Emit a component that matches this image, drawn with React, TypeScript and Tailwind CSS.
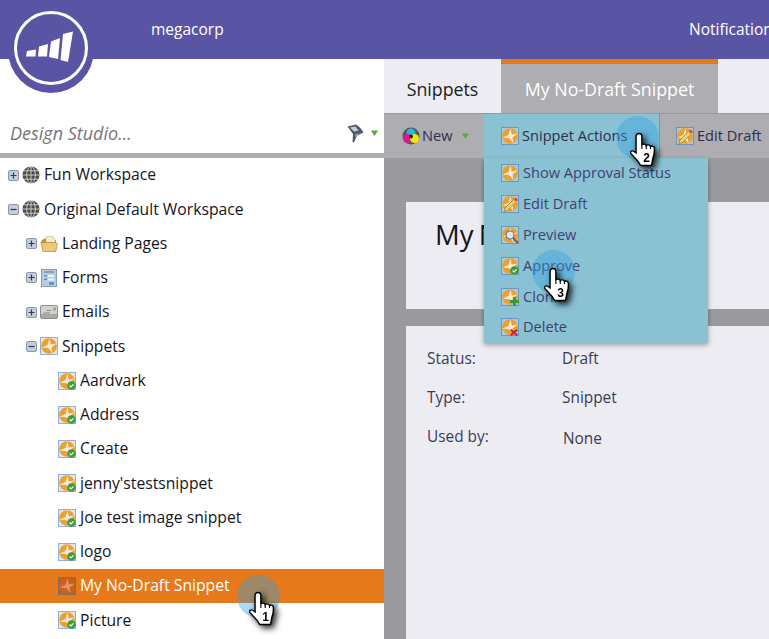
import React from "react";

type Badge = "check" | "pencil" | "zoom" | "plus" | "x" | "none";

const Logo = () => (
  <svg width="86" height="86" viewBox="0 0 86 86" className="absolute left-[8px] top-[7px]">
    <circle cx="43" cy="43" r="43" fill="#5a54a4" />
    <circle cx="43" cy="41" r="35.5" fill="none" stroke="#fff" strokeWidth="3" />
    <path d="M19 44l9-1.500-.5 7H18z" fill="#fff" />
    <path d="M31 39.500l9-2.500-1 12.500h-9z" fill="#fff" />
    <path d="M43 34.500l9-3.500-2 21-9-2z" fill="#fff" />
    <path d="M55 27l10-2.500L60 55l-7.500-2z" fill="#fff" />
  </svg>
);

const SnippetIcon = ({ badge = "none", dim = false }: { badge?: Badge; dim?: boolean }) => (
  <svg width="18" height="18" viewBox="0 0 18 18" className="shrink-0">
    <rect x="0.5" y="0.5" width="17" height="17" fill={dim ? "#b9651f" : "#c9d3de"} fillOpacity={dim ? 1 : 0.55} stroke="#2f6fb5" strokeDasharray="1 1" />
    <circle cx="9" cy="9" r="7.800" fill={dim ? "#d0601a" : "#efa02c"} />
    <path d="M1.500 10.500 7.500 8 9.500 1.500l1.300 6 5.700-1-5 4 1 5.800-4-5z" fill={dim ? "#dc9a68" : "#f0ebe2"} />
    {badge === "check" && (
      <>
        <circle cx="13.500" cy="13.500" r="4.300" fill="#3f9c3a" />
        <path d="M11.500 13.500l1.500 1.500 2.500-2.700" fill="none" stroke="#fff" strokeWidth="1.200" />
      </>
    )}
    {badge === "pencil" && (
      <>
        <path d="M3 16.500l1-3.500 8.500-8.500 2.500 2.500-8.500 8.500z" fill="#e8d36a" stroke="#8d7a30" strokeWidth="0.700" />
        <path d="M13.200 3.800l1.300-1.300 2.500 2.500-1.300 1.300z" fill="#d33" />
      </>
    )}
    {badge === "zoom" && (
      <>
        <circle cx="9" cy="9" r="4" fill="#dde6f2" stroke="#6b7686" strokeWidth="1.200" />
        <path d="M12 12l5 5" stroke="#8a5a2a" strokeWidth="2" />
      </>
    )}
    {badge === "plus" && <path d="M12 9h3v3h3v3h-3v3h-3v-3H9v-3h3z" fill="#3c9a34" />}
    {badge === "x" && <path d="M10.500 11l2.500 2 2.500-2 1.500 1.500-2.500 2 2.500 2-1.500 1.500-2.500-2-2.500 2-1.500-1.500 2.500-2-2.500-2z" fill="#d3202a" />}
  </svg>
);

const Expander = ({ open }: { open?: boolean }) => (
  <svg width="11" height="11" viewBox="0 0 11 11" className="shrink-0">
    <rect x="0.500" y="0.500" width="10" height="10" rx="1.500" fill="#c3cede" stroke="#8b95a6" />
    <path d={open ? "M2.500 5.500h6" : "M2.500 5.500h6M5.500 2.500v6"} stroke="#2f3b4e" strokeWidth="1.200" />
  </svg>
);

const Globe = () => (
  <svg width="18" height="18" viewBox="0 0 18 18" className="shrink-0">
    <circle cx="9" cy="9" r="8.500" fill="#4b4b4b" />
    <path d="M.5 9h17M2 4.800h14M2 13.200h14M9 .5v17" stroke="#e4e4e4" strokeWidth="0.800" />
    <ellipse cx="9" cy="9" rx="4.300" ry="8.500" fill="none" stroke="#e4e4e4" strokeWidth="0.800" />
  </svg>
);

const FolderIcon = () => (
  <svg width="18" height="18" viewBox="0 0 18 18" className="shrink-0">
    <path d="M1 6.500 4 3.500h5l1.500 1.500H16v11H3z" fill="#b98f3e" />
    <path d="M6 1.500h7l2 2.500v4H6z" fill="#f3ead0" stroke="#c4ad75" strokeWidth="0.500" />
    <path d="M0.800 7.500h15.500l1 1-1.500 8H3z" fill="#ecc878" stroke="#a98538" strokeWidth="0.700" />
  </svg>
);

const FormIcon = () => (
  <svg width="16" height="18" viewBox="0 0 16 18" className="shrink-0">
    <rect x="0.500" y="0.500" width="15" height="17" fill="#b6cde3" stroke="#8a9bb0" />
    <path d="M3 3h10" stroke="#6f8fb2" strokeWidth="1.500" />
    <rect x="7" y="6" width="6" height="2" fill="#f3f6fa" />
    <rect x="7" y="9.500" width="6" height="2" fill="#f3f6fa" />
    <rect x="3" y="6" width="3" height="1.500" fill="#6f8fb2" />
    <rect x="3" y="9.500" width="3" height="1.500" fill="#6f8fb2" />
    <rect x="8" y="13" width="5" height="3" fill="#5c97d4" />
  </svg>
);

const EmailIcon = () => (
  <svg width="18" height="14" viewBox="0 0 18 14" className="shrink-0">
    <rect x="0.500" y="0.500" width="17" height="13" rx="1.500" fill="#d2d2d2" stroke="#8f8f8f" />
    <rect x="1" y="9" width="16" height="4" fill="#a8a8a8" />
    <path d="M3 8h7M7 5.500h4" stroke="#888" />
    <rect x="13" y="2.500" width="3" height="3" fill="#b5a53a" />
  </svg>
);

const NewIcon = () => (
  <svg width="18" height="18" viewBox="0 0 18 18" className="shrink-0">
    <circle cx="9" cy="9" r="8.500" fill="#555" />
    <circle cx="9" cy="6" r="4.500" fill="#2ab5e8" />
    <circle cx="5.500" cy="11.500" r="4.500" fill="#e0188c" />
    <circle cx="12.500" cy="11.500" r="4.500" fill="#f6e316" />
    <circle cx="9" cy="9.500" r="2" fill="#222" />
  </svg>
);

const FilterIcon = () => (
  <svg width="17" height="19" viewBox="0 0 17 19" className="shrink-0">
    <path d="M0.500 2.500 9 .5c3 1.500 6 5 7.500 8l-6.500 3-3 7-1.500-.5L6 10z" fill="#4f5a70" />
    <path d="M3 3.500 8.500 2.500l3 4-4.500 1z" fill="#c5cedc" />
    <path d="M7.500 10.500l4.500-1.500-3 4z" fill="#8f9ab0" />
  </svg>
);

const Caret = () => (
  <svg width="7" height="6" viewBox="0 0 7 6" className="shrink-0">
    <path d="M0 .5h7L3.500 6z" fill="#5fa83c" />
  </svg>
);

// numbered hand cursor
const Hand = ({ n, className }: { n: number; className: string }) => (
  <svg width="27" height="37" viewBox="0 0 27 37" className={`absolute drop-shadow-[3px_3px_3px_rgba(0,0,0,0.85)] ${className}`}>
    <g transform="scale(1.120 1)">
      <path
        d="M8 1.500c1.600 0 2.600 1 2.600 2.600V13c.6-1.300 3.400-1.300 3.900.6.7-1.200 3.300-1 3.800.9.800-.9 3.200-.6 3.400 1.400.3 3.400-.1 7.300-1.200 10.100l-1.300 7.500H9.600L7 29 .9 21.600c-1.200-1.600.6-3.500 2.400-2.300L5.400 21V4.100C5.400 2.500 6.500 1.500 8 1.500z"
        fill="#fff"
        stroke="#000"
        strokeWidth="1.300"
      />
      <path d="M10.600 13v4M14.500 13.600V17M18.300 14.500V17" stroke="#000" strokeWidth="1" />
    </g>
    <text x="16.500" y="30" textAnchor="middle" fontSize="12" fontWeight="700" fontFamily="'Liberation Sans', sans-serif" fill="#000">
      {n}
    </text>
  </svg>
);

const Pulse = ({ className }: { className: string }) => (
  <div className={`absolute h-[43px] w-[43px] rounded-full bg-[#2f9fe0]/40 ${className}`} />
);

const TreeRow = ({
  indent,
  expander,
  icon,
  label,
  selected,
}: {
  indent: string;
  expander?: "open" | "closed";
  icon: React.ReactNode;
  label: string;
  selected?: boolean;
}) => (
  <div className={`flex h-[34.25px] items-center ${indent} ${selected ? "bg-[#e67a1a] text-white" : "text-[#14141c]"}`}>
    {expander && (
      <span className="mr-[3px] flex w-[11px]">
        <Expander open={expander === "open"} />
      </span>
    )}
    <span className="mr-[4px] flex w-[18px] justify-center">{icon}</span>
    <span className="whitespace-nowrap">{label}</span>
  </div>
);

const snippets = ["Aardvark", "Address", "Create", "jenny'stestsnippet", "Joe test image snippet", "logo"];

const menuItems: { label: string; badge: Badge }[] = [
  { label: "Show Approval Status", badge: "none" },
  { label: "Edit Draft", badge: "pencil" },
  { label: "Preview", badge: "zoom" },
  { label: "Approve", badge: "check" },
  { label: "Clone", badge: "plus" },
  { label: "Delete", badge: "x" },
];

const details = [
  { label: "Status:", value: "Draft", extra: "" },
  { label: "Type:", value: "Snippet", extra: "" },
  { label: "Used by:", value: "None", extra: "ml-px mt-[2px]" },
];

export default function App() {
  return (
    <div className="relative h-[639px] w-[769px] overflow-hidden bg-white font-['Open_Sans',sans-serif]">
      <header className="flex h-[59px] items-center justify-between bg-[#5a54a4] pl-[151px] text-[15.500px] text-white">
        <span>megacorp</span>
        <span className="w-[80px] overflow-hidden whitespace-nowrap">Notifications</span>
      </header>

      <div className="grid h-[580px] grid-cols-[384px_1fr]">
        {/* left tree */}
        <aside className="overflow-hidden bg-white">
          <div className="flex h-[99px] items-end border-b-[5px] border-[#aeadb2] pb-[6px] pl-[10px] pr-[6px]">
            <div className="flex h-[28px] w-full items-center">
              <span className="flex-1 text-[18px] italic text-[#77757a]">Design Studio...</span>
              <span className="mr-[7px] flex">
                <FilterIcon />
              </span>
              <Caret />
            </div>
          </div>
          <div className="text-[15.700px]">
            <TreeRow indent="pl-[8px]" expander="closed" icon={<Globe />} label="Fun Workspace" />
            <TreeRow indent="pl-[8px]" expander="open" icon={<Globe />} label="Original Default Workspace" />
            <TreeRow indent="pl-[26px]" expander="closed" icon={<FolderIcon />} label="Landing Pages" />
            <TreeRow indent="pl-[26px]" expander="closed" icon={<FormIcon />} label="Forms" />
            <TreeRow indent="pl-[26px]" expander="closed" icon={<EmailIcon />} label="Emails" />
            <TreeRow indent="pl-[26px]" expander="open" icon={<SnippetIcon />} label="Snippets" />
            {snippets.map((s) => (
              <TreeRow key={s} indent="pl-[58px]" icon={<SnippetIcon badge="check" />} label={s} />
            ))}
            <TreeRow indent="pl-[58px]" icon={<SnippetIcon dim />} label="My No-Draft Snippet" selected />
            <TreeRow indent="pl-[58px]" icon={<SnippetIcon badge="check" />} label="Picture" />
          </div>
        </aside>

        {/* right pane */}
        <main className="flex min-w-0 flex-col bg-[#9b9a9f]">
          <div className="flex h-[54px] bg-[#edecf3] text-[17.800px]">
            <div className="flex w-[117px] items-center justify-center pt-[6px] text-[#1b1b24]">Snippets</div>
            <div className="flex w-[217px] items-center justify-center border-t-[5px] border-[#e67a1a] bg-[#aeadb2] pt-px text-white">
              My No-Draft Snippet
            </div>
          </div>
          <div className="mt-px flex h-[44px] items-center bg-[#aeadb2] text-[14.600px] text-[#2e2e4a]">
            <div className="flex h-full w-[100px] items-center pl-[18px]">
              <NewIcon />
              <span className="ml-[2px]">New</span>
              <span className="ml-[9px] flex">
                <Caret />
              </span>
            </div>
            <div className="flex h-full w-[176px] items-center border-r border-[#8f8e94] bg-[#8ac2d4] pl-[17px]">
              <SnippetIcon />
              <span className="ml-[3px] whitespace-nowrap">Snippet Actions</span>
            </div>
            <div className="flex items-center pl-[16px]">
              <SnippetIcon badge="pencil" />
              <span className="ml-[3px] whitespace-nowrap">Edit Draft</span>
            </div>
          </div>
          <div className="flex flex-1 flex-col gap-[17px] pl-[22px] pt-[44px]">
            <div className="h-[107px] whitespace-nowrap bg-[#edecf3] pl-[29px] pt-[12px] text-[27.500px] text-[#14141c] [word-spacing:-2px]">My No-Draft Snippet</div>
            <div className="flex-1 bg-[#edecf3] pl-[21px] pt-[21px] text-[15.400px] text-[#3a3c56]">
              {details.map((d) => (
                <div key={d.label} className="flex h-[39px]">
                  <span className="w-[135px]">{d.label}</span>
                  <span className={d.extra}>{d.value}</span>
                </div>
              ))}
            </div>
          </div>
        </main>
      </div>

      {/* Snippet Actions dropdown */}
      <div className="absolute left-[484px] top-[158px] w-[224px] bg-[#8ac2d4] text-[14.600px] text-[#3f3f75] shadow-[0_2px_5px_rgba(0,0,0,0.35)]">
        {menuItems.map((m) => (
          <div key={m.label} className="flex h-[30.800px] items-center pl-[17px]">
            <SnippetIcon badge={m.badge} />
            <span className="ml-[4px] whitespace-nowrap">{m.label}</span>
          </div>
        ))}
      </div>

      <Logo />

      <Pulse className="left-[237px] top-[575px]" />
      <Pulse className="left-[616px] top-[116px]" />
      <Pulse className="left-[532px] top-[250px]" />
      <Hand n={1} className="left-[249px] top-[591px]" />
      <Hand n={2} className="left-[630px] top-[132px]" />
      <Hand n={3} className="left-[544px] top-[267px]" />
    </div>
  );
}
